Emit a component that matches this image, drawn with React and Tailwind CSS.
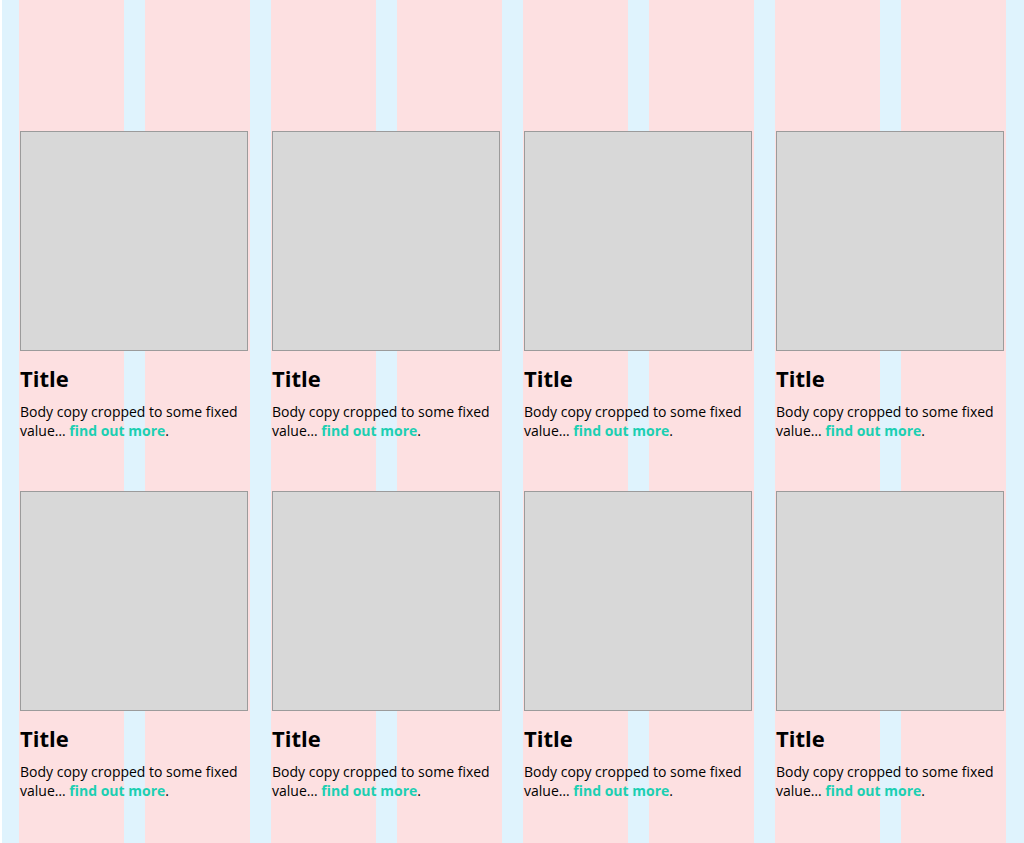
import React from "react";

const cards = Array.from({ length: 8 });

function Card() {
  return (
    <div className="flex flex-col">
      <div className="ml-[1px] h-[220px] w-[228px] border border-[#9b9b9b] bg-[#d8d8d8]" />
      <h2 className="ml-[1px] mt-[12px] text-[22px] font-bold leading-[30px] text-black">Title</h2>
      <p className="ml-[1px] mt-[9px] w-[230px] text-[14px] leading-[19px] text-black">
        Body copy cropped to some fixed value…{" "}
        <a href="#" className="font-bold text-[#1ccfb2]">find out more</a>.
      </p>
    </div>
  );
}

export default function App() {
  return (
    <div
      className="h-[843px] w-[1024px] overflow-hidden bg-white pl-[2px]"
      style={{ fontFamily: '"Open Sans", "Noto Sans", sans-serif' }}
    >
      <div className="relative h-full bg-[#dff3fd] pl-[17px] pr-[18px]">
        <div className="absolute inset-y-0 left-[17px] right-[18px] grid grid-cols-8 gap-x-[21px]">
          {Array.from({ length: 8 }).map((_, i) => (
            <div key={i} className="bg-[#fde0e1]" />
          ))}
        </div>
        <div className="relative grid grid-cols-[231px_231px_231px_231px] gap-x-[21px] gap-y-0 pt-[131px] [grid-auto-rows:360px]">
          {cards.map((_, i) => (
            <Card key={i} />
          ))}
        </div>
      </div>
    </div>
  );
}
